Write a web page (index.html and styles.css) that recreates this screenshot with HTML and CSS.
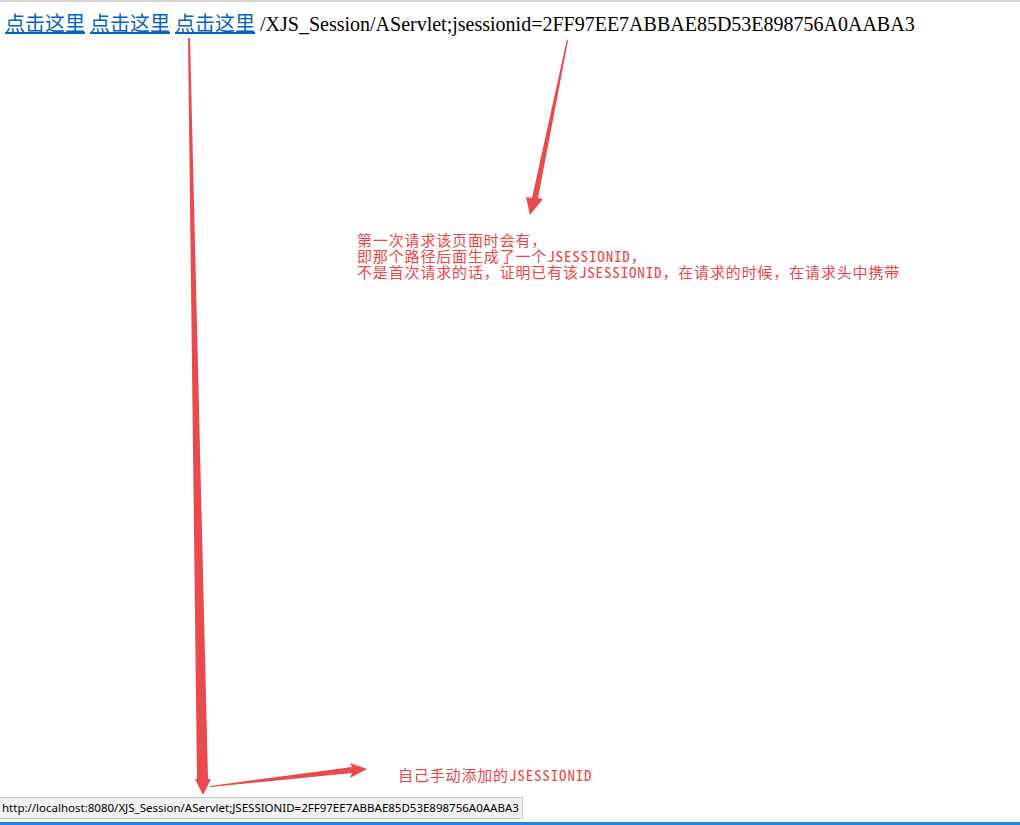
FILE: index.html
```html
<!DOCTYPE html>
<html lang="zh-CN">
<head>
<meta charset="utf-8">
<title>Session</title>
<link rel="stylesheet" href="styles.css">
</head>
<body>
<div class="topline"></div>
<main class="content">
  <p class="line"><a href="#">点击这里</a> <a href="#">点击这里</a> <a href="#">点击这里</a> /XJS_Session/AServlet;jsessionid=2FF97EE7ABBAE85D53E898756A0AABA3</p>
</main>

<div class="note note-top">第一次请求该页面时会有，<br>即那个路径后面生成了一个JSESSIONID，<br>不是首次请求的话，证明已有该JSESSIONID，在请求的时候，在请求头中携带</div>
<div class="note note-bottom">自己手动添加的JSESSIONID</div>

<svg class="arrows" width="1020" height="825" viewBox="0 0 1020 825" xmlns="http://www.w3.org/2000/svg">
  <polygon points="567,39 568,41 538,198 543,199 530,215 526,197 532,198" fill="#ea4a4d"/>
  <polygon points="188,38 190,38 208,779 211,779 203,795 195,779 197,779" fill="#ea4a4d"/>
  <polygon points="210,787 352,773 350,778 367,769 350,763 352,767 210,786" fill="#ea4a4d"/>
</svg>

<div class="statusbar">http://localhost:8080/XJS_Session/AServlet;JSESSIONID=2FF97EE7ABBAE85D53E898756A0AABA3</div>
<div class="bottomline"></div>
</body>
</html>
```

FILE: styles.css
```css
html, body {
  margin: 0;
  padding: 0;
  background: #ffffff;
}
body {
  width: 1020px;
  height: 825px;
  position: relative;
  overflow: hidden;
  font-family: "Liberation Serif", "Noto Sans CJK SC", serif;
}
.topline {
  height: 2px;
  background: #d4d4d4;
}
.content {
  padding: 11px 6px 0 5px;
}
.line {
  margin: 0;
  font-size: 20px;
  line-height: 23px;
  color: #000000;
  white-space: nowrap;
}
.line a {
  color: #0563c1;
  text-decoration: underline;
}
.note {
  position: absolute;
  color: #f04444;
  font-family: "Noto Sans Mono CJK SC", "Liberation Mono", "Noto Sans CJK SC", monospace;
  font-size: 15px;
  letter-spacing: 0.85px;
  line-height: 16px;
  white-space: nowrap;
}
.note-top {
  left: 357px;
  top: 232px;
}
.note-bottom {
  left: 398px;
  top: 767px;
}
.arrows {
  position: absolute;
  left: 0;
  top: 0;
}
.statusbar {
  position: absolute;
  left: 0;
  top: 797px;
  width: fit-content;
  height: 22px;
  box-sizing: border-box;
  padding: 0 3px 0 2px;
  background: #f2f2f2;
  border: 1px solid #c9c9c9;
  border-left: none;
  font-family: "Noto Sans", "Liberation Sans", sans-serif;
  font-size: 11.5px;
  line-height: 20px;
  color: #000;
  white-space: nowrap;
}
.bottomline {
  position: absolute;
  left: 0;
  bottom: 0;
  width: 1020px;
  height: 3px;
  background: #1e88dc;
}
```
